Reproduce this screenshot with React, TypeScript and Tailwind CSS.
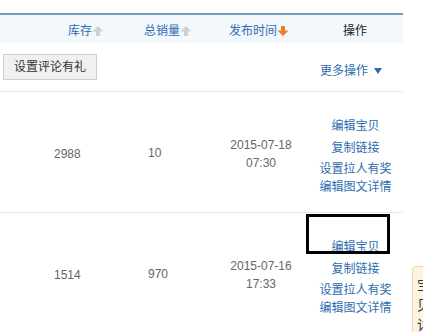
import React from "react";

const FONT = { fontFamily: '"Liberation Sans", Arial, "Noto Sans CJK SC", sans-serif' };

function SortArrow({ dir, color }: { dir: "up" | "down"; color: string }) {
  return (
    <svg width="12" height="12" viewBox="0 0 12 12" className="inline-block">
      {dir === "up" ? (
        <path d="M6 1 L11.5 6.5 L8 6.5 L8 11 L4 11 L4 6.5 L0.5 6.5 Z" fill={color} />
      ) : (
        <path d="M6 11 L11.5 5.5 L8 5.5 L8 1 L4 1 L4 5.5 L0.5 5.5 Z" fill={color} />
      )}
    </svg>
  );
}

type Item = { stock: string; sales: string; date: string; time: string };

const ITEMS: Item[] = [
  { stock: "2988", sales: "10", date: "2015-07-18", time: "07:30" },
  { stock: "1514", sales: "970", date: "2015-07-16", time: "17:33" },
];

const OPS = ["编辑宝贝", "复制链接", "设置拉人有奖", "编辑图文详情"];

function Row({ item }: { item: Item }) {
  return (
    <div className="grid h-[121px] grid-cols-[136px_74px_96px_97px] items-center border-b border-[#e6e6e6] text-[12px] text-[#666]">
      <div className="pl-[54px] pt-[3px]">{item.stock}</div>
      <div className="pl-[12px] pt-[1px]">{item.sales}</div>
      <div className="flex flex-col items-center pl-[6px] pt-[3px] leading-[18px]">
        <span>{item.date}</span>
        <span>{item.time}</span>
      </div>
      <div className="flex flex-col items-center pt-[6px] pl-[2px] text-[#2d6cb0]">
        <a className="leading-[22px]">{OPS[0]}</a>
        <a className="leading-[22px]">{OPS[1]}</a>
        <a className="leading-[20px]">{OPS[2]}</a>
        <a className="leading-[17px]">{OPS[3]}</a>
      </div>
    </div>
  );
}

export default function App() {
  return (
    <div className="relative h-[332px] w-[423px] overflow-hidden bg-white" style={FONT}>
      <div className="w-[403px] pt-[13px]">
        <div className="grid h-[30px] grid-cols-[136px_74px_96px_97px] items-center border-t-2 border-[#6f9cc0] bg-[#f3f8fc] pt-[4px] text-[12px] text-[#2d6cb0]">
          <div className="flex items-center pl-[68px]">
            库存
            <SortArrow dir="up" color="#cfcfcf" />
          </div>
          <div className="flex items-center pl-[8px]">
            总销量
            <SortArrow dir="up" color="#cfcfcf" />
          </div>
          <div className="flex items-center pl-[19px]">
            发布时间
            <SortArrow dir="down" color="#ef7f22" />
          </div>
          <div className="pl-[37px] text-[#222]">操作</div>
        </div>

        <div className="flex h-[49px] items-center justify-between border-b border-[#e6e6e6] pl-[3px] pr-[21px]">
          <button className="h-[26px] w-[94px] border border-[#cfcfcf] bg-[#f0f0f0] text-[12px] text-[#333]">
            设置评论有礼
          </button>
          <a className="flex items-center gap-[6px] pt-[8px] text-[12px] text-[#2d6cb0]">
            更多操作
            <svg width="8" height="6" viewBox="0 0 8 6">
              <path d="M0 0 L8 0 L4 6 Z" fill="#2d6cb0" />
            </svg>
          </a>
        </div>

        {ITEMS.map((item) => (
          <Row key={item.date} item={item} />
        ))}
      </div>

      <div className="absolute left-[306px] top-[214px] h-[40px] w-[84px] border-[3px] border-black" />

      <div className="absolute left-[412px] top-[266px] h-[80px] w-[60px] rounded-tl-[4px] border border-[#f3d3a9] bg-[#fdf3e3] pl-[4px] pt-[8px] text-[14px] leading-[20px] text-[#333]">
        <div>宝</div>
        <div>贝</div>
        <div>详</div>
      </div>
    </div>
  );
}
